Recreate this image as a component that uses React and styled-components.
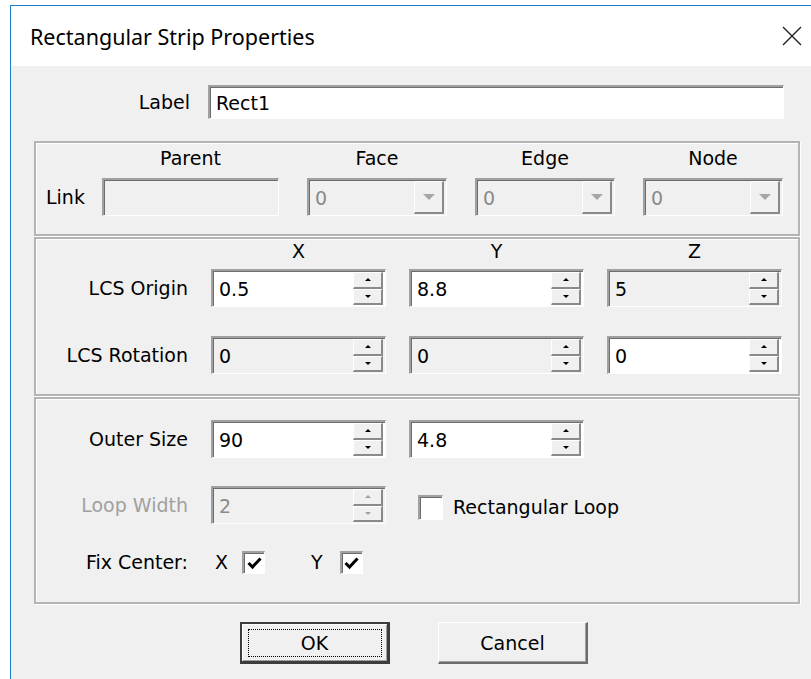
import React from 'react';
import styled, { createGlobalStyle } from 'styled-components';

const GlobalStyle = createGlobalStyle`
  body {
    margin: 0;
    background: #ffffff;
  }
  * {
    box-sizing: border-box;
  }
`;

const Window = styled.div`
  margin: 5px 0 0 10px;
  height: 674px;
  display: flex;
  flex-direction: column;
  border-top: 1px solid #1a7fd4;
  border-left: 1px solid #1a7fd4;
  font-family: "DejaVu Sans", sans-serif;
  font-size: 19px;
  color: #000;
`;

const TitleBar = styled.div`
  height: 60px;
  flex-shrink: 0;
  display: flex;
  align-items: center;
  justify-content: space-between;
  padding: 0 9px 0 19px;
  background: #fff;
  font-family: "Noto Sans", sans-serif;
  font-size: 21.5px;
`;

const Body = styled.div`
  flex: 1;
  background: #f0f0f0;
  padding: 19px 0 0 23px;
`;

const LabelRow = styled.div`
  display: grid;
  grid-template-columns: 156px 576px;
  column-gap: 18px;
  align-items: center;
  margin-bottom: 22px;
`;

const Group = styled.div`
  width: 766px;
  border: 2px solid #b4b4b4;
  box-shadow: inset 1px 1px 0 #fff, 1px 1px 0 #fff;
  padding: ${p => p.$pad};
  margin-top: ${p => p.$mt || 0}px;
`;

const Row = styled.div`
  display: grid;
  grid-template-columns: ${p => p.$cols || '152px 175px 175px 175px'};
  column-gap: ${p => p.$gap || 23}px;
  align-items: center;
  margin-top: ${p => p.$mt || 0}px;
  height: ${p => (p.$h ? `${p.$h}px` : 'auto')};
`;

const Header = styled.div`
  text-align: center;
  line-height: 24px;
`;

const RowLabel = styled.div`
  text-align: ${p => p.$align || 'right'};
  color: ${p => (p.$disabled ? '#a0a0a0' : '#000')};
  white-space: nowrap;
`;

const Field = styled.div`
  display: flex;
  align-items: center;
  height: 38px;
  padding: 0 2px 0 0;
  background: ${p => (p.$disabled ? '#f0f0f0' : '#fff')};
  border-style: solid;
  border-width: 2px 1px 1px 2px;
  border-color: #a0a0a0 #fff #fff #a0a0a0;
  box-shadow: inset 1px 1px 0 #6d6d6d;
`;

const TextField = styled(Field)`
  height: 34px;
`;

const Value = styled.span`
  flex: 1;
  padding-left: 6px;
  color: ${p => p.$color || '#000'};
  white-space: nowrap;
  overflow: hidden;
`;

const SpinColumn = styled.div`
  width: 30px;
  align-self: stretch;
  display: flex;
  flex-direction: column;
  padding: 1px 0;
`;

const SpinButton = styled.div`
  flex: 1;
  display: flex;
  align-items: center;
  justify-content: center;
  background: #f0f0f0;
  border-style: solid;
  border-width: 1px 2px 2px 1px;
  border-color: #fff #8a8a8a #8a8a8a #fff;
`;

const Arrow = styled.span`
  width: 0;
  height: 0;
  border-left: ${p => p.$size}px solid transparent;
  border-right: ${p => p.$size}px solid transparent;
  ${p => (p.$up ? 'border-bottom' : 'border-top')}: ${p => p.$size}px solid ${p => p.$color};
`;

const DropButton = styled.div`
  width: 30px;
  align-self: stretch;
  margin: 1px 0;
  display: flex;
  align-items: center;
  justify-content: center;
  background: #f0f0f0;
  border-style: solid;
  border-width: 1px 2px 2px 1px;
  border-color: #fff #8a8a8a #8a8a8a #fff;
`;

const CheckWrap = styled.div`
  display: flex;
  align-items: center;
  gap: ${p => p.$gap || 10}px;
  padding-left: ${p => p.$pl || 0}px;
  white-space: nowrap;
`;

const LoopOption = styled(CheckWrap)`
  grid-column: 3 / 5;
  padding-top: 4px;
`;

const CheckBox = styled.div`
  width: ${p => p.$size}px;
  height: ${p => p.$size}px;
  display: flex;
  align-items: center;
  justify-content: center;
  background: #fff;
  border-style: solid;
  border-width: 2px 1px 1px 2px;
  border-color: #a0a0a0 #fff #fff #a0a0a0;
  box-shadow: inset 1px 1px 0 #6d6d6d;
`;

const FixPairs = styled.div`
  grid-column: 2 / 4;
  display: flex;
  align-items: center;
  gap: 46px;
  padding-left: 4px;
`;

const ButtonRow = styled.div`
  display: flex;
  gap: 48px;
  margin: 18px 0 0 206px;
`;

const Button = styled.button`
  width: 150px;
  height: 42px;
  padding: 0;
  font-family: "DejaVu Sans", sans-serif;
  font-size: 19px;
  color: #000;
  background: #f0f0f0;
  border-style: solid;
  border-width: ${p => (p.$default ? '2px 3px 3px 2px' : '1px 2px 2px 1px')};
  border-color: ${p =>
    p.$default ? '#3c3c3c #3c3c3c #3c3c3c #3c3c3c' : '#fff #6d6d6d #6d6d6d #fff'};
  box-shadow: ${p => (p.$default ? 'inset 1px 1px 0 #fff, inset -1px -1px 0 #a0a0a0' : 'inset -1px -1px 0 #a0a0a0')};
  display: flex;
  align-items: center;
  justify-content: center;
`;

const FocusRing = styled.span`
  width: 134px;
  height: 28px;
  display: flex;
  align-items: center;
  justify-content: center;
  border: 1px dotted #000;
`;

const linkCols = '28px 177px 140px 140px 140px';

function SpinBox({ value, disabled, dim, readOnly }) {
  const arrow = dim ? '#a0a0a0' : '#000';
  return (
    <Field $disabled={disabled || readOnly}>
      <Value $color={dim ? '#8a8a8a' : '#000'}>{value}</Value>
      <SpinColumn>
        <SpinButton>
          <Arrow $up $size={3} $color={arrow} />
        </SpinButton>
        <SpinButton>
          <Arrow $size={3} $color={arrow} />
        </SpinButton>
      </SpinColumn>
    </Field>
  );
}

function Combo({ value }) {
  return (
    <Field $disabled>
      <Value $color="#8a8a8a">{value}</Value>
      <DropButton>
        <Arrow $size={6} $color="#a6a6a6" />
      </DropButton>
    </Field>
  );
}

function Check({ size, checked }) {
  return (
    <CheckBox $size={size}>
      {checked && (
        <svg width="15" height="14" viewBox="0 0 15 14">
          <path d="M1.5 7 L5.5 11 L13.5 2.5" fill="none" stroke="#000" strokeWidth="3" />
        </svg>
      )}
    </CheckBox>
  );
}

export default function App() {
  return (
    <>
      <GlobalStyle />
      <Window>
        <TitleBar>
          <span>Rectangular Strip Properties</span>
          <svg width="20" height="20" viewBox="0 0 20 20">
            <path d="M1 1 L19 19 M19 1 L1 19" stroke="#222" strokeWidth="1.4" />
          </svg>
        </TitleBar>
        <Body>
          <LabelRow>
            <RowLabel>Label</RowLabel>
            <TextField>
              <Value>Rect1</Value>
            </TextField>
          </LabelRow>

          <Group $pad="3px 0 18px 10px">
            <Row $cols={linkCols} $gap={28}>
              <span />
              <Header>Parent</Header>
              <Header>Face</Header>
              <Header>Edge</Header>
              <Header>Node</Header>
            </Row>
            <Row $cols={linkCols} $gap={28} $mt={8}>
              <RowLabel $align="left">Link</RowLabel>
              <Field $disabled />
              <Combo value="0" />
              <Combo value="0" />
              <Combo value="0" />
            </Row>
          </Group>

          <Group $pad="0 0 20px 0" $mt={1}>
            <Row>
              <span />
              <Header>X</Header>
              <Header>Y</Header>
              <Header>Z</Header>
            </Row>
            <Row $mt={6}>
              <RowLabel>LCS Origin</RowLabel>
              <SpinBox value="0.5" />
              <SpinBox value="8.8" />
              <SpinBox value="5" readOnly />
            </Row>
            <Row $mt={29}>
              <RowLabel>LCS Rotation</RowLabel>
              <SpinBox value="0" disabled />
              <SpinBox value="0" disabled />
              <SpinBox value="0" />
            </Row>
          </Group>

          <Group $pad="21px 0 28px 0" $mt={1}>
            <Row>
              <RowLabel>Outer Size</RowLabel>
              <SpinBox value="90" />
              <SpinBox value="4.8" />
            </Row>
            <Row $mt={28}>
              <RowLabel $disabled>Loop Width</RowLabel>
              <SpinBox value="2" disabled dim />
              <LoopOption $pl={9} $gap={10}>
                <Check size={25} />
                <span>Rectangular Loop</span>
              </LoopOption>
            </Row>
            <Row $mt={26} $h={24}>
              <RowLabel>Fix Center:</RowLabel>
              <FixPairs>
                <CheckWrap $gap={14}>
                  <span>X</span>
                  <Check size={23} checked />
                </CheckWrap>
                <CheckWrap $gap={17}>
                  <span>Y</span>
                  <Check size={23} checked />
                </CheckWrap>
              </FixPairs>
            </Row>
          </Group>

          <ButtonRow>
            <Button $default>
              <FocusRing>OK</FocusRing>
            </Button>
            <Button>Cancel</Button>
          </ButtonRow>
        </Body>
      </Window>
    </>
  );
}
